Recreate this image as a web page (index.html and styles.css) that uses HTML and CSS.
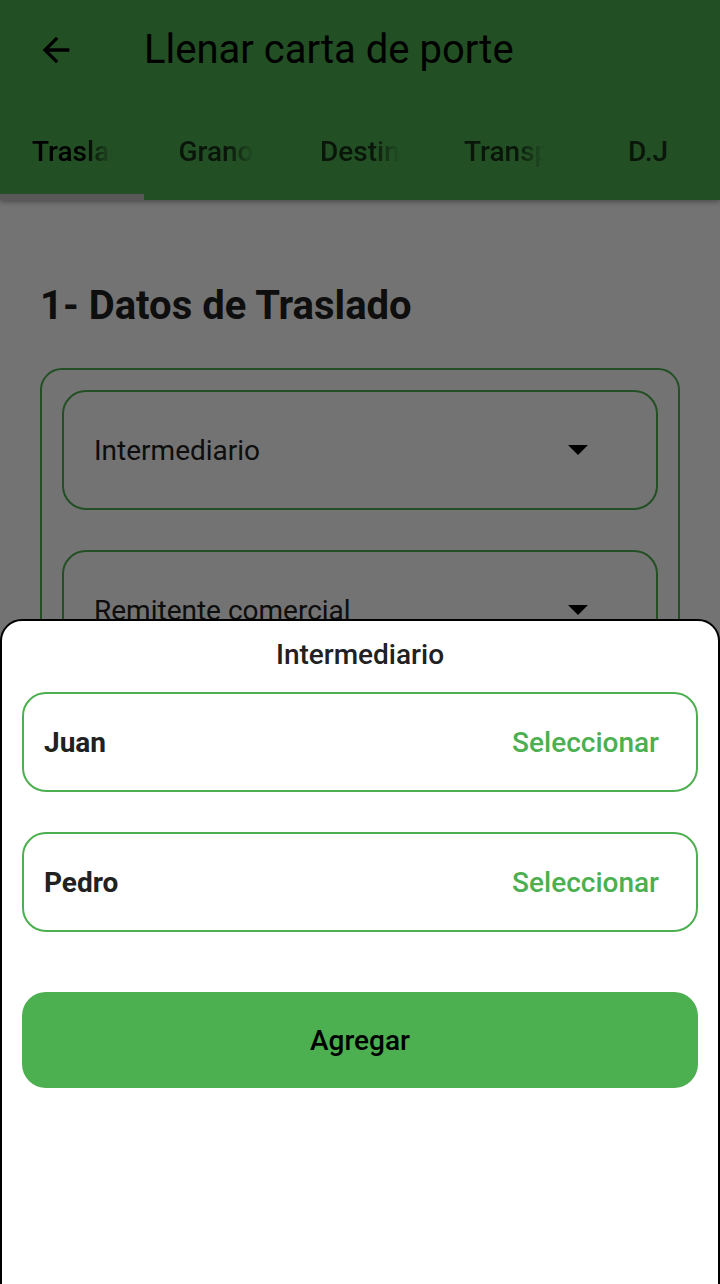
FILE: index.html
```html
<!DOCTYPE html>
<html lang="es">
<head>
<meta charset="utf-8">
<title>Llenar carta de porte</title>
<link rel="stylesheet" href="styles.css">
</head>
<body>
<div class="screen">
  <header class="appbar">
    <div class="toolbar">
      <button class="back" aria-label="Volver">
        <svg width="40" height="40" viewBox="0 0 24 24"><path d="M20 11H7.83l5.59-5.59L12 4l-8 8 8 8 1.41-1.41L7.83 13H20v-2z" fill="#000"/></svg>
      </button>
      <h1 class="title">Llenar carta de porte</h1>
    </div>
    <nav class="tabs">
      <div class="tab active"><span class="tab-label">Traslado</span></div>
      <div class="tab"><span class="tab-label">Grano</span></div>
      <div class="tab"><span class="tab-label">Destino</span></div>
      <div class="tab"><span class="tab-label">Transporte</span></div>
      <div class="tab"><span class="tab-label">D.J</span></div>
    </nav>
  </header>

  <main class="content">
    <h2 class="section-title">1- Datos de Traslado</h2>
    <div class="card">
      <div class="dropdown">
        <span class="dropdown-label">Intermediario</span>
        <span class="caret"></span>
      </div>
      <div class="dropdown">
        <span class="dropdown-label">Remitente comercial</span>
        <span class="caret"></span>
      </div>
    </div>
  </main>

  <div class="scrim"></div>

  <section class="sheet">
    <h3 class="sheet-title">Intermediario</h3>
    <div class="option">
      <span class="option-name">Juan</span>
      <span class="option-action">Seleccionar</span>
    </div>
    <div class="option">
      <span class="option-name">Pedro</span>
      <span class="option-action">Seleccionar</span>
    </div>
    <button class="add-btn">Agregar</button>
  </section>
</div>
</body>
</html>
```

FILE: styles.css
```css
* { box-sizing: border-box; }
html, body { margin: 0; padding: 0; }
body {
  width: 720px;
  height: 1284px;
  overflow: hidden;
  font-family: Roboto, "Noto Sans", "Liberation Sans", sans-serif;
  background: #fff;
  color: #212121;
}
.screen {
  position: relative;
  width: 720px;
  height: 1284px;
  overflow: hidden;
  background: #fff;
}
.appbar {
  background: #4caf50;
  height: 200px;
  box-shadow: 0 2px 5px rgba(0,0,0,0.35);
  position: relative;
  z-index: 1;
}
.toolbar {
  height: 100px;
  display: flex;
  align-items: center;
}
.back {
  background: none;
  border: 0;
  padding: 0;
  margin-left: 36px;
  width: 40px;
  height: 40px;
  display: flex;
}
.title {
  margin: 0 0 0 68px;
  font-size: 40px;
  font-weight: 400;
  line-height: 48px;
  color: #000;
}
.tabs {
  height: 100px;
  display: flex;
}
.tab {
  width: 144px;
  display: flex;
  justify-content: center;
  align-items: center;
  padding: 0 32px;
  overflow: hidden;
  position: relative;
}
.tab.active::after {
  content: "";
  position: absolute;
  left: 0;
  right: 0;
  bottom: 0;
  height: 6px;
  background: #c4c4c4;
}
.tab-label {
  display: block;
  max-width: 80px;
  white-space: nowrap;
  overflow: hidden;
  font-size: 28px;
  font-weight: 500;
  line-height: 34px;
  margin-top: 4px;
  color: rgba(0,0,0,0.72);
  -webkit-mask-image: linear-gradient(to right, #000 65%, transparent 100%);
  mask-image: linear-gradient(to right, #000 65%, transparent 100%);
}
.tab:last-child .tab-label {
  -webkit-mask-image: none;
  mask-image: none;
}
.tab.active .tab-label { color: #000; }

.content {
  padding: 82px 40px 0;
}
.section-title {
  margin: 0 0 38px;
  font-size: 40px;
  font-weight: 700;
  line-height: 48px;
  color: #212121;
}
.card {
  border: 2px solid #4caf50;
  border-radius: 22px;
  padding: 20px 20px 40px;
  display: flex;
  flex-direction: column;
  gap: 40px;
}
.dropdown {
  height: 120px;
  border: 2px solid #4caf50;
  border-radius: 24px;
  display: flex;
  align-items: center;
  justify-content: space-between;
  padding: 0 68px 0 30px;
}
.dropdown-label {
  font-size: 28px;
  color: #212121;
}
.caret {
  width: 0;
  height: 0;
  border-left: 10px solid transparent;
  border-right: 10px solid transparent;
  border-top: 10px solid #000;
}

.scrim {
  position: absolute;
  inset: 0;
  background: rgba(0,0,0,0.55);
  z-index: 2;
}
.sheet {
  position: absolute;
  left: 0;
  right: 0;
  top: 619px;
  bottom: -20px;
  background: #fff;
  border: 2px solid #000;
  border-radius: 22px 22px 0 0;
  z-index: 3;
  padding: 17px 20px 0;
  display: flex;
  flex-direction: column;
}
.sheet-title {
  margin: 0 0 20px;
  text-align: center;
  font-size: 28px;
  font-weight: 500;
  line-height: 34px;
  color: #212121;
}
.option {
  height: 100px;
  border: 2px solid #4caf50;
  border-radius: 24px;
  display: flex;
  align-items: center;
  justify-content: space-between;
  padding: 0 37px 0 20px;
  margin-bottom: 40px;
}
.option-name {
  font-size: 28px;
  font-weight: 700;
  color: #212121;
}
.option-action {
  font-size: 28px;
  font-weight: 500;
  color: #4caf50;
}
.add-btn {
  margin-top: 20px;
  height: 96px;
  border: 0;
  border-radius: 24px;
  background: #4caf50;
  font-family: inherit;
  font-size: 28px;
  font-weight: 500;
  color: #000;
}
```
